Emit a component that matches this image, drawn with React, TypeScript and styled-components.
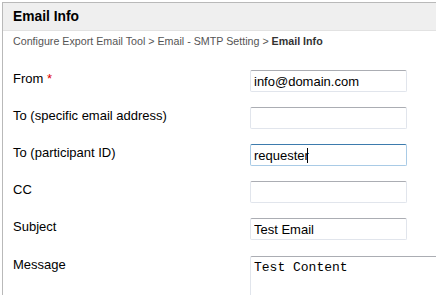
import React from "react";
import styled, { createGlobalStyle } from "styled-components";

const Global = createGlobalStyle`
  html, body { margin: 0; padding: 0; background: #ffffff; overflow: hidden; }
  body { font-family: Arial, "Liberation Sans", sans-serif; }
`;

const Panel = styled.div`
  margin: 2px 0 0 2px;
  border-top: 1px solid #b9b9b9;
  border-left: 1px solid #b9b9b9;
  height: 300px;
`;

const Header = styled.div`
  height: 27px;
  line-height: 27px;
  background: #efefef;
  border-bottom: 1px solid #e2e2e2;
  padding-left: 10px;
  font-family: Arial, "Liberation Sans", sans-serif;
  font-weight: bold;
  font-size: 13.8px;
  color: #000;
`;

const Crumbs = styled.div`
  padding: 4px 0 0 10px;
  font-family: Arial, "Liberation Sans", sans-serif;
  font-size: 10.7px;
  line-height: 13px;
  color: #555;
`;

const Current = styled.b`
  color: #333;
`;

const Form = styled.div`
  display: flex;
  flex-direction: column;
  padding: 22px 0 0 10px;
`;

const Row = styled.div<{ $gap?: number }>`
  display: flex;
  align-items: flex-start;
  margin-bottom: ${(p) => p.$gap ?? 15}px;
`;

const Label = styled.div`
  width: 237px;
  flex: none;
  padding-top: 1px;
  font-family: Arial, "Liberation Sans", sans-serif;
  font-size: 13px;
  line-height: 15px;
  color: #000;
`;

const Req = styled.span`
  color: #e00000;
`;

const Field = styled.div`
  position: relative;
  flex: none;
`;

const Input = styled.input<{ $focus?: boolean }>`
  box-sizing: border-box;
  width: 157px;
  height: 22px;
  margin: 0;
  padding: 0 3px;
  font-family: Arial, "Liberation Sans", sans-serif;
  font-size: 13px;
  color: #000;
  background: #fff;
  outline: none;
  border-radius: 2px;
  border: 1px solid ${(p) => (p.$focus ? "#a9cbe6" : "#e1e5ec")};
  border-top-color: ${(p) => (p.$focus ? "#3d7bad" : "#abadb3")};
`;

const Caret = styled.span`
  position: absolute;
  left: 57px;
  top: 4px;
  width: 1px;
  height: 15px;
  background: #000;
`;

const TextArea = styled.textarea`
  box-sizing: border-box;
  width: 320px;
  height: 80px;
  margin: 0;
  padding: 3px 3px;
  resize: none;
  font-family: "Courier New", "Liberation Mono", monospace;
  font-size: 13px;
  line-height: 15px;
  color: #000;
  background: #fff;
  outline: none;
  border: 1px solid #e1e5ec;
  border-top-color: #abadb3;
  border-radius: 2px;
`;

export default function App() {
  return (
    <>
      <Global />
      <Panel>
        <Header>Email Info</Header>
        <Crumbs>
          Configure Export Email Tool &gt; Email - SMTP Setting &gt; <Current>Email Info</Current>
        </Crumbs>
        <Form>
          <Row>
            <Label>
              From <Req>*</Req>
            </Label>
            <Field>
              <Input defaultValue="info@domain.com" />
            </Field>
          </Row>
          <Row>
            <Label>To (specific email address)</Label>
            <Field>
              <Input defaultValue="" />
            </Field>
          </Row>
          <Row>
            <Label>To (participant ID)</Label>
            <Field>
              <Input $focus defaultValue="requester" />
              <Caret />
            </Field>
          </Row>
          <Row>
            <Label>CC</Label>
            <Field>
              <Input defaultValue="" />
            </Field>
          </Row>
          <Row $gap={16}>
            <Label>Subject</Label>
            <Field>
              <Input defaultValue="Test Email" />
            </Field>
          </Row>
          <Row>
            <Label>Message</Label>
            <Field>
              <TextArea defaultValue="Test Content" />
            </Field>
          </Row>
        </Form>
      </Panel>
    </>
  );
}
